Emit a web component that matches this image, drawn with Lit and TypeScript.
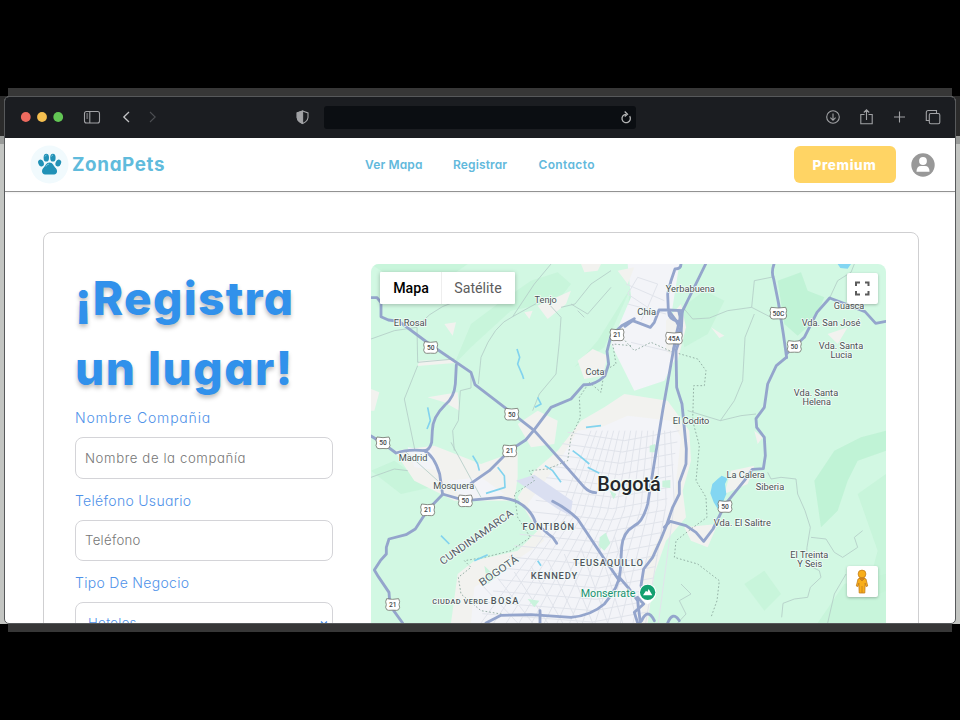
import { LitElement, html, svg, css } from "lit";
import { customElement } from "lit/decorators.js";

type Place = { x: number; y: number; w: number; text: string; size?: number; kind?: string; rot?: number };

// The map canvas is 1545 x 1140 units, drawn at a third of that size.
const roads: string[] = [
  "M0 101 L18 101 L30 116 L30 158 L52 168 L84 172 L175 240 L300 325 L312 362 L420 445 L490 500 L570 590 L640 670 Q655 686 674 686",
  "M256 303 L253 360 Q250 400 222 423 Q184 460 184 500 L182 535 Q175 560 160 560",
  "M790 164 L752 185 L720 215 L708 262 L713 300 L702 335 Q670 365 638 362 L600 405 L540 430 L490 497 L464 528 L415 560 L355 620 L300 658",
  "M0 516 L36 538 L75 567 Q110 555 160 560 Q190 575 206 630 L214 685",
  "M214 690 L283 710 L390 700 Q425 706 440 714 Q480 735 494 777 L532 810 L545 820 L557 838",
  "M216 690 L170 738 L133 795 L105 812 L54 825 L46 850 L46 870 L28 890 L10 918 L22 938 L54 985 L57 1025 L95 1077",
  "M545 712 Q590 735 620 765 L700 885 L745 950",
  "M1004 0 Q970 70 930 150 L915 215 L875 440 L830 720 Q815 775 790 785 Q755 805 752 850 L748 920 Q745 970 700 1020 Q660 1055 600 1060 L480 1052 L390 1054 L345 1077",
  "M745 940 L775 975 L800 1010 L808 1077",
  "M930 0 Q930 15 912 15 L900 50 L890 90 L892 138 L915 170 L923 185",
  "M762 187 L785 170 L838 190 L850 175 L864 138 L890 138 L934 140 L930 215 L915 260 L917 370 L933 420 L946 555 L945 600 L925 655 L925 690 L905 730 L886 785 L870 825 L845 880 L818 915 L810 965 L820 1000",
  "M893 145 Q893 165 920 172 M923 140 L932 180 L920 220 L908 255",
  "M880 790 L898 772 L945 785 L975 805 L998 832 L1026 795 L1062 722 L1120 650 L1144 616 L1177 614 L1183 575 L1180 520 L1157 490 L1155 464 L1180 430 L1190 360 L1216 305 L1246 280",
  "M1209 0 Q1200 25 1208 45 L1222 115 L1237 210 L1247 281",
  "M1246 270 L1300 220 L1338 145 L1376 102 L1418 118 L1482 143 L1514 178 L1545 172",
];

const minorRoads: string[] = [
  "M140 185 Q210 110 300 105 Q340 85 370 25",
  "M0 225 L70 200 L138 190 L140 295 L250 285",
  "M140 305 L100 405 L132 560",
  "M300 330 L300 372 L268 380 L262 470 L245 500 L250 560",
  "M322 360 L330 280 Q370 180 425 158 L520 105 L570 160 L565 235 L555 330 L505 390 L485 440",
  "M425 158 L490 60 L540 0 M570 130 L612 120 L660 60 L720 20",
  "M600 120 L650 150 L720 70 M620 140 L640 160",
  "M940 135 L965 165 L1015 162 L1070 140 L1142 130 L1150 50 L1210 38",
  "M1142 130 L1200 160 M1150 150 L1122 220 L1115 350 L1090 410 L1048 470 L950 440",
  "M1048 470 L1110 455 L1155 450",
  "M1190 625 L1200 645 L1230 640 L1275 645 L1280 690 L1302 740 L1318 790 L1308 850 L1305 900 L1345 920 L1350 940 L1318 970 L1310 1000 L1270 1005 L1236 1018 L1232 1060",
  "M1320 820 L1365 825 L1390 865 L1415 880 L1460 850 L1450 820 L1475 800",
  "M1425 930 L1390 990 L1370 1077",
  "M1376 102 L1400 50 L1440 25 L1450 0",
  "M0 640 L70 615 L110 620 M240 535 L330 700 M100 560 L200 650",
  "M930 960 L960 990 L925 1010 L945 1050 L920 1077",
];

const borders: string[] = [
  "M762 230 L790 260 L840 235 L900 262 L980 285 L1005 320 L1000 365 L968 365 L965 470 L985 545 L975 650 L1005 700 L1008 760 L960 795 L915 830 L910 880 L980 900 L1045 950 L1038 1010 L1020 1060",
  "M780 245 L725 240 L735 300 L700 320 L690 385 L655 355 L625 400 L628 460 L600 520 L590 590 L530 615 L475 620 L490 650 L430 690 L440 760 L478 820 L420 860 L340 880 L280 890 L300 910 L262 940 L270 990 L330 1040 L420 1055",
];

const greens: { d: string; c: string }[] = [
  { d: "M380 120 L480 50 L560 25 L600 60 L560 110 L420 140 L300 250 L250 300 L300 180 Z", c: "soft" },
  { d: "M1220 50 L1290 25 L1310 80 L1360 100 L1330 170 L1280 215 L1240 180 Z", c: "deep" },
  { d: "M920 140 L1000 80 L1060 110 L1010 210 L940 250 Z", c: "soft" },
  { d: "M1330 650 L1390 560 L1470 520 L1545 500 L1545 560 L1460 590 L1430 650 L1400 740 L1350 790 Z", c: "deep" },
  { d: "M1460 690 L1545 630 L1545 980 L1480 1010 L1520 860 Z", c: "soft" },
  { d: "M1340 1077 L1420 960 L1545 930 L1545 1077 Z", c: "soft" },
  { d: "M780 40 L850 65 L830 170 L770 145 Z", c: "soft" },
  { d: "M0 0 L290 0 L190 70 L90 60 Z", c: "soft" },
  { d: "M0 620 L70 590 L180 670 L90 690 Z", c: "soft" },
  { d: "M680 230 L780 70 L700 250 L610 310 Z", c: "soft" },
  { d: "M1120 960 L1180 920 L1230 990 L1180 1040 Z", c: "soft" },
];

const urban: { d: string; c: string }[] = [
  { d: "M770 0 L925 0 L900 160 L920 270 L880 350 L790 380 L720 240 L780 100 Z", c: "town" },
  { d: "M630 470 L700 430 L760 390 L890 410 L955 500 L960 590 L935 680 L945 760 L885 830 L850 930 L830 1077 L240 1077 L260 930 L310 890 L440 860 L500 800 L440 700 L490 620 L560 560 Z", c: "sand" },
  { d: "M620 500 L690 490 L770 455 L900 470 L930 520 L910 700 L870 810 L815 910 L812 1077 L300 1077 L310 970 L420 900 L520 830 L470 720 L560 600 Z", c: "town" },
  { d: "M70 560 L190 545 L330 600 L440 560 L440 640 L430 710 L250 710 L130 650 Z", c: "sand" },
  { d: "M110 550 L180 560 L210 620 L130 610 Z M230 650 L330 640 L400 690 L280 710 Z", c: "town" },
  { d: "M440 480 L500 440 L560 470 L550 540 L480 550 Z", c: "sand" },
  { d: "M620 290 L665 255 L710 275 L695 335 L640 345 Z", c: "sand" },
  { d: "M500 125 L600 80 L585 120 L530 165 Z", c: "sand" },
  { d: "M145 290 L250 285 L250 297 L140 306 Z M170 400 L260 385 L265 440 L220 415 Z", c: "sand" },
  { d: "M0 375 L25 385 L10 440 L0 440 Z M220 180 L255 175 L245 215 Z M460 145 L485 140 L475 165 Z", c: "sand" },
  { d: "M885 170 L930 120 L945 190 L920 290 L885 260 Z", c: "sand" },
  { d: "M770 270 L870 320 L850 350 L770 330 Z", c: "town" },
  { d: "M1020 190 L1060 215 L1045 222 Z M1370 210 L1430 190 L1400 240 Z M1150 500 L1175 520 L1160 540 Z", c: "sand" },
  { d: "M1080 620 L1150 605 L1130 660 L1060 690 Z", c: "sand" },
  { d: "M630 0 L690 0 L680 20 L640 25 Z M740 20 L790 10 L770 60 Z", c: "sand" },
  { d: "M940 790 L1040 780 L1010 850 L960 830 Z", c: "sand" },
];

const waters: string[] = [
  "M438 255 L446 280 L440 300 L455 335 L458 345",
  "M170 430 L178 470 L168 495",
  "M305 575 L320 600 L325 620 M380 610 L400 635 L402 670 L345 688",
  "M605 560 L625 575 L655 600 M650 610 L685 628",
  "M522 605 L545 620 L570 655",
  "M500 400 L510 420 L492 430 M645 490 L690 485",
  "M210 815 L235 840 M310 890 L350 872 M500 890 L510 905",
];

const places: Place[] = [
  { x: 524, y: 118, w: 67, text: "Tenjo" },
  { x: 118, y: 187, w: 99, text: "El Rosal" },
  { x: 672, y: 333, w: 57, text: "Cota" },
  { x: 958, y: 84, w: 147, text: "Yerbabuena" },
  { x: 827, y: 152, w: 56, text: "Chía" },
  { x: 1434, y: 136, w: 92, text: "Guasca" },
  { x: 1380, y: 187, w: 176, text: "Vda. San José" },
  { x: 1410, y: 255, w: 133, text: "Vda. Santa" },
  { x: 1411, y: 283, w: 65, text: "Lucia" },
  { x: 1335, y: 395, w: 133, text: "Vda. Santa" },
  { x: 1337, y: 423, w: 85, text: "Helena" },
  { x: 960, y: 479, w: 110, text: "El Codito" },
  { x: 126, y: 592, w: 86, text: "Madrid" },
  { x: 248, y: 676, w: 123, text: "Mosquera" },
  { x: 1124, y: 641, w: 115, text: "La Calera" },
  { x: 1197, y: 677, w: 85, text: "Siberia" },
  { x: 1114, y: 786, w: 171, text: "Vda. El Salitre" },
  { x: 1315, y: 882, w: 114, text: "El Treinta" },
  { x: 1316, y: 910, w: 75, text: "Y Seis" },
  { x: 532, y: 798, w: 155, text: "FONTIBÓN", kind: "district" },
  { x: 549, y: 945, w: 139, text: "KENNEDY", kind: "district" },
  { x: 711, y: 905, w: 209, text: "TEUSAQUILLO", kind: "district" },
  { x: 267, y: 1020, w: 167, text: "CIUDAD VERDE", kind: "district", size: 22 },
  { x: 401, y: 1020, w: 83, text: "BOSA", kind: "district" },
  { x: 322, y: 828, w: 262, text: "CUNDINAMARCA", kind: "region", size: 31, rot: -35.5 },
  { x: 389, y: 929, w: 136, text: "BOGOTÁ", kind: "region", size: 31, rot: -34.5 },
  { x: 711, y: 999, w: 164, text: "Monserrate", kind: "park", size: 31 },
  { x: 774, y: 680, w: 191, text: "Bogotá", kind: "capital", size: 62 },
];

const shields: [number, number, string][] = [
  [179, 251, "50"], [422, 451, "50"], [738, 213, "21"], [36, 537, "50"],
  [1222, 148, "50C"], [909, 223, "45A"], [1270, 248, "50"], [170, 738, "21"],
  [283, 711, "50"], [416, 561, "21"], [65, 1022, "21"], [1062, 728, "50"],
];

// Street grid of the city, fanned out slightly so the blocks are not uniform.
const streets: string[] = [
  ...Array.from({ length: 15 }, (_, i) => `M${330 + i * 38} 1077 L${560 + i * 25} ${760 - i * 3} L${660 + i * 17} 500`),
  ...Array.from({ length: 17 }, (_, i) => `M${590 - i * 16} ${505 + i * 34} L${760 - i * 6} ${530 + i * 34} L${925 - i * 6} ${500 + i * 34}`),
  ...Array.from({ length: 9 }, (_, i) => `M${330 + i * 50} ${960 - i * 18} L${440 + i * 45} 1077`),
  "M800 40 L770 90 L830 130 L860 60 Z M830 130 L810 170",
  "M765 60 L880 110 M770 120 L885 150 M780 235 L905 265",
];

@customElement("zona-map")
export class ZonaMap extends LitElement {
  static styles = css`
    :host { display: block; position: relative; width: 515px; height: 380px; flex: none;
      border-radius: 8px 8px 0 0; overflow: hidden; background: #d2f8e3; font-family: Roboto, sans-serif; }
    .canvas { display: block; width: 515px; height: 380px; }
    .deep { fill: #bbf1d2; opacity: .8; }
    .soft { fill: #c3f4d7; opacity: .7; }
    .town { fill: #f3f4f8; }
    .sand { fill: #f2f2ef; }
    .street { fill: none; stroke: #e1e4eb; stroke-width: 3; }
    .minor { fill: none; stroke: #b3cdc6; stroke-width: 2.5; stroke-linejoin: round; }
    .border { fill: none; stroke: #8aa69b; stroke-width: 2.6; stroke-dasharray: 5 6; }
    .road { fill: none; stroke: #94a5cc; stroke-width: 8.5; stroke-linejoin: round; stroke-linecap: round; }
    .water { fill: none; stroke: #82d3ee; stroke-width: 5; stroke-linejoin: round; }
    .lake { fill: #83d6f2; }
    .airport { fill: #dadff1; }
    .park-patch { fill: #c9f3dc; }
    .place { fill: #4a5053; stroke: #f4fcf8; stroke-width: 5; paint-order: stroke; stroke-linejoin: round; text-anchor: middle; }
    .district { fill: #50565d; font-weight: 500; }
    .region { fill: #566068; font-weight: 400; }
    .park { fill: #17916f; }
    .capital { fill: #24272b; font-weight: 500; stroke-width: 7; }
    .plate { fill: #fff; stroke: #73766f; stroke-width: 2.5; }
    .number { fill: #41464a; font-size: 20px; font-weight: 500; text-anchor: middle; }
    .types { position: absolute; left: 9px; top: 8px; display: flex; height: 32px; background: #fff;
      box-shadow: 0 1px 4px rgba(0,0,0,.25); border-radius: 1px; font-size: 14.200px; line-height: 32px; }
    .type { width: 74px; text-align: center; color: #5d5d5d; }
    .type.active { width: 60px; padding-left: 1px; box-sizing: content-box; color: #000; font-weight: 500; margin-right: -1px; border-right: 1px solid #eee; }
    .tool { position: absolute; right: 8px; width: 31px; height: 31px; background: #fff; border-radius: 2px;
      box-shadow: 0 1px 3px rgba(0,0,0,.25); }
    .full { top: 9px; }
    .pegman { top: 302px; }
    .tool svg { display: block; }
  `;

  render() {
    return html`
      <svg class="canvas" viewBox="0 0 1545 1140">
        ${greens.map((g) => svg`<path class=${g.c} d=${g.d} />`)}
        ${urban.map((u) => svg`<path class=${u.c} d=${u.d} />`)}
        ${streets.map((d) => svg`<path class="street" d=${d} />`)}
        <path class="airport" d="M435 650 L490 632 L605 712 L598 755 L560 735 Z" />
        <path class="park-patch" d="M686 820 L704 806 L718 838 L700 860 L684 846 Z M836 545 L852 540 L852 565 L836 565 Z M874 650 L898 648 L898 672 L874 670 Z M470 1005 L505 1010 L490 1030 Z M716 680 L736 690 L728 706 Z M340 905 L375 940 L350 960 Z" />
        ${minorRoads.map((d) => svg`<path class="minor" d=${d} />`)}
        ${borders.map((d) => svg`<path class="border" d=${d} />`)}
        ${waters.map((d) => svg`<path class="water" d=${d} />`)}
        <path class="lake" d="M1040 645 L1052 635 L1070 643 L1062 660 L1066 690 L1052 724 L1040 734 L1028 715 L1018 688 L1024 660 Z M1400 0 L1440 0 L1430 14 L1408 12 Z" />
        ${roads.map((d) => svg`<path class="road" d=${d} />`)}
        <path class="road" d="M507 1040 V1077 M800 1000 L818 1020 L790 1045 L800 1077 M812 1070 Q830 1030 850 1070 M890 1077 Q905 1040 925 1070" />
        ${shields.map(([x, y, n]) => {
          const w = n.length > 2 ? 25 : 21;
          return svg`<g transform="translate(${x} ${y})">
            <path class="plate" d="M${-w + 3} -18 Q0 -14 ${w - 3} -18 L${w} -9 Q${w - 4} 0 ${w} 8 Q${w - 2} 18 ${w - 9} 17 Q0 16 ${9 - w} 17 Q${2 - w} 18 ${-w} 8 Q${4 - w} 0 ${-w} -9 Z" />
            <text class="number" y="7">${n}</text></g>`;
        })}
        ${places.map((p) => svg`<text class="place ${p.kind ?? ""}" font-size=${p.size ?? 28}
          textLength=${p.w} lengthAdjust=${p.kind === "district" ? "spacing" : "spacingAndGlyphs"}
          transform="translate(${p.x} ${p.y}) rotate(${p.rot ?? 0})">${p.text}</text>`)}
        <g transform="translate(830 985)">
          <path d="M-24 8 Q-20 24 0 36 Q20 24 24 8 Z" fill="#fff" />
          <circle r="26" fill="#fff" /><circle r="23" fill="#12a06f" />
          <path d="M-14 9 L-5 -5 L-1 -1 L3 -10 L14 9 Z" fill="#fff" />
        </g>
      </svg>
      <div class="types"><div class="type active">Mapa</div><div class="type">Satélite</div></div>
      <div class="tool full">
        <svg width="31" height="31" viewBox="0 0 31 31" fill="none" stroke="#5b5b5b" stroke-width="2">
          <path d="M9 13V9.500H13M18 9.500h3.500V13M21.500 18v3.500H18M13 21.500H9V18" />
        </svg>
      </div>
      <div class="tool pegman">
        <svg width="31" height="31" viewBox="0 0 31 31" fill="#f8ae19" stroke="#c47d1c" stroke-width=".8">
          <path d="M11 13 Q15 10 19 13 L20.700 20 L19 20.500 L18.200 17 L17.800 27 H12.200 L11.800 17 L11 20.500 L9.300 20 Z" />
          <circle cx="15" cy="8" r="3.900" />
          <path d="M15 20 V27" /><path d="M12 12 L15 15 L18 12 Z" fill="#d5841a" />
        </svg>
      </div>
    `;
  }
}

@customElement("app-root")
export class AppRoot extends LitElement {
  static styles = css`
    :host { display: block; box-sizing: border-box; width: 960px; height: 720px; padding-top: 88px; background: #000;
      overflow: hidden; font-family: Inter, sans-serif; font-feature-settings: "cv11"; }
    .strip { height: 8px; margin: 0 8px; background: #373737; }
    .backdrop { height: 528px; padding: 0 4px; background: linear-gradient(#2b2b2b 0 40px, #999b99 40px 48px, #c3c5c2 48px); }
    .window { box-sizing: border-box; height: 528px; border: 1px solid #57595b; border-radius: 5px; background: #fff;
      overflow: hidden; display: flex; flex-direction: column; }
    .chrome { flex: none; height: 41px; background: #1b1d21; display: flex; align-items: center; box-sizing: border-box; }
    .chrome svg { display: block; height: 41px; flex: none; }
    .left { width: 319px; flex: none; }
    .right { width: 319px; flex: none; }
    .address { flex: 1; height: 23px; background: #0b0e12; border-radius: 3px; display: flex; justify-content: flex-end; }
    .address svg { width: 20px; height: 23px; }
    .header { flex: none; height: 54px; box-sizing: border-box; border-bottom: 1px solid #929292; display: flex;
      align-items: center; box-shadow: 0 1px 2px rgba(0,0,0,.06); padding: 0 20px 0 25px; }
    .logo { display: flex; align-items: center; width: 335px; gap: 3px; }
    .brand { font-size: 18.800px; font-weight: 700; color: #60bbdc; letter-spacing: .65px; }
    .nav { flex: 1; display: flex; gap: 31px; font-size: 12px; font-weight: 600; color: #62b9dc; white-space: nowrap; letter-spacing: .13px; }
    .nav span { width: 57px; }
    .nav .short { width: 54.500px; }
    .nav .wide { letter-spacing: .35px; }
    .premium { width: 102px; height: 37px; border-radius: 6px; background: #ffd464; color: #fff; font-weight: 800;
      font-size: 13.500px; letter-spacing: .6px; display: flex; align-items: center; justify-content: center; margin-right: 15.500px; }
    .page { flex: 1; padding: 40px 36px 0 38px; overflow: hidden; }
    .card { box-sizing: border-box; height: 460px; border: 1px solid #cfcfd1; border-radius: 8px; display: flex;
      padding: 31px 31px 0 31px; gap: 38px; background: #fff; }
    .form { width: 258px; flex: none; display: flex; flex-direction: column; }
    .title { margin: -1px 0 1px; font-size: 46px; line-height: 70px; font-weight: 800; color: #3191eb; letter-spacing: 1.300px;
      white-space: nowrap; text-shadow: 0 3px 4px rgba(0,0,0,.25); }
    .title .second { letter-spacing: 1.500px; }
    .label { font-size: 14px; line-height: 20px; color: #4f92e9; white-space: nowrap; margin-top: 12px; letter-spacing: .3px; font-weight: 350; }
    .label.first { margin-top: 4px; letter-spacing: .8px; }
    .field { box-sizing: border-box; flex: none; height: 41.500px; margin-top: 9px; border: 1px solid #d4d4d8; border-radius: 8px; color: #767676;
      font-size: 13.200px; padding: 0 10px 0 9px; display: flex; align-items: center; white-space: nowrap; letter-spacing: .3px; font-weight: 350; }
    .field.long { letter-spacing: .6px; }
    .select { color: #4f92e9; padding: 0 2px 0 12px; justify-content: space-between; }
  `;

  render() {
    return html`
      <div class="strip"></div>
      <div class="backdrop">
        <div class="window">
          <div class="chrome">
            <div class="left">
              <svg width="319" viewBox="5 96.500 319 41" fill="none" stroke="#a1a2a5" stroke-width="1.100">
                <circle cx="25.800" cy="116.500" r="4.900" fill="#ed6a5f" stroke="none" />
                <circle cx="42" cy="116.500" r="4.900" fill="#f5bf4f" stroke="none" />
                <circle cx="58.200" cy="116.500" r="4.900" fill="#62c554" stroke="none" />
                <rect x="84.500" y="111" width="15" height="11.500" rx="2" />
                <path d="M89.800 111 V122.500 M86.300 113.500 h1.800 M86.300 115.500 h1.800 M86.300 117.500 h1.800" />
                <path d="M129 111.500 L123.800 116.500 L129 121.500" stroke="#c0c1c3" stroke-width="1.300" />
                <path d="M150 111.500 L155.200 116.500 L150 121.500" stroke="#4b4d51" />
                <path d="M302.600 110.500 L308 112.500 V117 Q307.500 121 302.600 123 Q297.600 121 297.200 117 V112.500 Z" />
                <path d="M302.600 110.500 L297.200 112.500 V117 Q297.600 121 302.600 123 Z" fill="#a1a2a5" />
              </svg>
            </div>
            <div class="address">
              <svg viewBox="616.500 105.500 20 23" fill="none" stroke="#b2b3b4" stroke-width="1.300">
                <path d="M630.200 115.700 A4.200 4.200 0 1 1 626.500 113.800" /><path d="M625.200 111 L628 113.700 L625.200 116" />
              </svg>
            </div>
            <div class="right">
              <svg width="319" viewBox="636 96.500 319 41" fill="none" stroke="#a1a2a5" stroke-width="1.100">
                <circle cx="833" cy="116.500" r="6.300" />
                <path d="M833 113 V119.500 M830.400 117.200 L833 119.800 L835.600 117.200" />
                <path d="M864.500 114 H860.800 V123.300 H872.200 V114 H868.500 M866.500 119.500 V109.500 M863.800 112 L866.500 109.300 L869.200 112" />
                <path d="M894 116.500 H905 M899.500 111 V122" />
                <rect x="929.300" y="113" width="10.500" height="10.300" rx="1.500" />
                <path d="M929.300 120 H926.300 V112 Q926.300 110 928.300 110 H936.500 V113" />
              </svg>
            </div>
          </div>
          <div class="header">
            <div class="logo">
              <svg width="39" height="39" viewBox="0 0 39 39">
                <circle cx="19.500" cy="19.500" r="19" fill="#f1fafd" />
                <g fill="#2191b6">
                  <ellipse cx="11" cy="18" rx="2.700" ry="3.600" transform="rotate(-22 11 18)" />
                  <ellipse cx="16.300" cy="12.700" rx="2.700" ry="3.900" />
                  <ellipse cx="22.900" cy="12.700" rx="2.700" ry="3.900" />
                  <ellipse cx="28.300" cy="18" rx="2.700" ry="3.600" transform="rotate(22 28.300 18)" />
                  <path d="M19.500 17.500 C16 17.500 15.500 21 13.300 23 C11 25.500 12 29.500 15 29.500 C17.500 29.500 21.500 29.500 24.200 29.500 C27.200 29.500 28 25.500 25.700 23 C23.500 21 23 17.500 19.500 17.500 Z" />
                </g>
                <g fill="none" stroke="#8ed3e6" stroke-width=".8"><path d="M15 11.500 q.5-1.500 1.500-1.500 M21.500 11.500 q.5-1.500 1.500-1.500 M16 21.500 q1-2.500 3-2.500" /></g>
              </svg>
              <div class="brand">ZonaPets</div>
            </div>
            <div class="nav"><span>Ver Mapa</span><span class="short">Registrar</span><span class="wide">Contacto</span></div>
            <div class="premium">Premium</div>
            <svg width="24" height="24" viewBox="0 0 24 24">
              <circle cx="12" cy="12" r="11.700" fill="#989898" />
              <circle cx="12" cy="8" r="3.900" fill="#fff" />
              <path d="M5.500 18.800 Q5.500 12.900 10 12.900 H14 Q18.500 12.900 18.500 18.800 Z" fill="#fff" />
            </svg>
          </div>
          <div class="page">
            <div class="card">
              <div class="form">
                <h1 class="title"><div>¡Registra</div><div class="second">un lugar!</div></h1>
                <div class="label first">Nombre Compañia</div>
                <div class="field long">Nombre de la compañía</div>
                <div class="label">Teléfono Usuario</div>
                <div class="field">Teléfono</div>
                <div class="label">Tipo De Negocio</div>
                <div class="field select"><span>Hoteles</span>
                  <svg width="12" height="12" viewBox="0 0 12 12" fill="none" stroke="#4f92e9" stroke-width="1.500"><path d="M3 4.500 L6 7.500 L9 4.500" /></svg>
                </div>
              </div>
              <zona-map></zona-map>
            </div>
          </div>
        </div>
      </div>
      <div class="strip"></div>
    `;
  }
}
